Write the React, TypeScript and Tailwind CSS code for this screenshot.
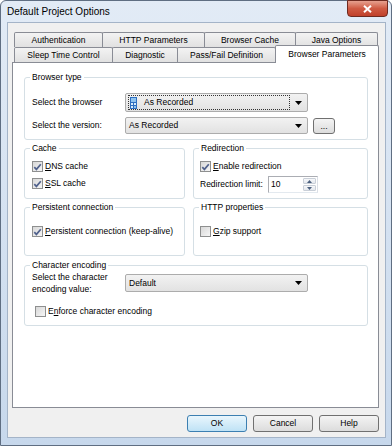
import React from 'react'

function Check({ checked }: { checked?: boolean }) {
  return (
    <span className="w-[11px] h-[11px] shrink-0 border border-[#8e8f8f] bg-linear-to-br from-[#d8d8d8] to-[#f6f6f6] flex items-center justify-center">
      {checked && (
        <svg width="9" height="8" viewBox="0 0 9 8">
          <path d="M1.3 4.2 L3.4 6.4 L7.8 1.2" fill="none" stroke="#50618c" strokeWidth="1.7" />
        </svg>
      )}
    </span>
  )
}

function CheckRow({ checked, pre, u, rest }: { checked?: boolean; pre?: string; u: string; rest: string }) {
  return (
    <div className="h-[13px] flex items-center gap-[2px]">
      <Check checked={checked} />
      <span className="leading-[11px]">
        {pre}
        <span className="underline underline-offset-[1px]">{u}</span>
        {rest}
      </span>
    </div>
  )
}

function Arrow() {
  return (
    <svg width="7" height="4" viewBox="0 0 7 4" className="shrink-0">
      <polygon points="0,0 7,0 3.5,4" fill="#000" />
    </svg>
  )
}

function Combo({ text, h, focus }: { text: string; h: string; focus?: boolean }) {
  return (
    <div className={`w-[183px] ${h} border border-[#acacac] rounded-[2px] bg-linear-to-b from-[#f2f2f2] to-[#e2e2e2] flex items-center pl-[2px] pr-[5px]`}>
      {focus ? (
        <div className="flex-1 h-[15px] border border-dotted border-[#333] flex items-center pl-[1px] mr-[5px]">
          <svg width="7" height="12" viewBox="0 0 7 12" className="mr-[7px]">
            <rect x="0" y="0" width="7" height="12" fill="#2f6fc0" />
            <rect x="1" y="1" width="5" height="4" fill="#8fc3ef" />
            <rect x="1" y="6" width="2" height="2" fill="#d9ecfb" />
            <rect x="4" y="6" width="2" height="2" fill="#d9ecfb" />
            <rect x="1" y="9" width="2" height="2" fill="#d9ecfb" />
            <rect x="4" y="9" width="2" height="2" fill="#8fc3ef" />
          </svg>
          <span>{text}</span>
        </div>
      ) : (
        <span className="flex-1 pl-[1px]">{text}</span>
      )}
      <Arrow />
    </div>
  )
}

function Group({ title, className, children }: { title: string; className: string; children: React.ReactNode }) {
  return (
    <fieldset className={`border border-[#d5dfe5] rounded-[3px] ${className}`}>
      <legend className="ml-[5px] px-[2px] leading-[12px]">{title}</legend>
      {children}
    </fieldset>
  )
}

function Btn({ label, primary }: { label: string; primary?: boolean }) {
  return (
    <div
      className={`w-[60px] h-[17px] rounded-[3px] border flex items-center justify-center ${
        primary
          ? 'border-[#3c7fb1] bg-linear-to-b from-[#e9f6fd] to-[#bfe2f5]'
          : 'border-[#707070] bg-linear-to-b from-[#f4f4f4] to-[#dcdcdc]'
      }`}
    >
      {label}
    </div>
  )
}

const tab = 'h-[15px] -ml-px first:ml-0 border border-b-0 border-[#898c95] rounded-t-[2px] bg-linear-to-b from-[#f3f3f3] to-[#e1e1e1] flex items-center justify-center'

export default function App() {
  return (
    <div className="w-[392px] h-[446px] overflow-hidden font-['Liberation_Sans',Arial,sans-serif] text-[8.5px] text-black">
      <div className="w-full h-full rounded-t-[6px] border border-[#5f6e82] bg-linear-to-b from-[#e2ebf6] to-[#c7d8ec] flex flex-col">
        {/* title bar */}
        <div className="h-[21px] flex items-start shrink-0">
          <span className="pl-[6px] pt-[5px] text-[10px] leading-[12px]">Default Project Options</span>
          <div className="ml-auto mr-[3px] -mt-px w-[41px] h-[17px] rounded-b-[4px] border border-[#6e2a20] bg-linear-to-b from-[#e6a08f] via-[#cf5a43] to-[#c0402a] flex items-center justify-center">
            <svg width="9" height="8" viewBox="0 0 9 8">
              <path d="M1 0.8 L8 7.2 M8 0.8 L1 7.2" stroke="#fff" strokeWidth="2" />
            </svg>
          </div>
        </div>

        {/* client area */}
        <div className="ml-[6px] mr-[5px] mb-[7px] flex-1 border border-[#a4b4c8] bg-[#f0f0f0] flex flex-col pt-[9px]">
          {/* tabs */}
          <div className="ml-[6px] flex flex-col relative z-10">
            <div className="flex">
              <div className={`${tab} w-[89px]`}>Authentication</div>
              <div className={`${tab} w-[103px]`}>HTTP Parameters</div>
              <div className={`${tab} w-[92px]`}>Browser Cache</div>
              <div className={`${tab} w-[83px]`}>Java Options</div>
            </div>
            <div className="flex items-end -mt-[2px] h-[17px]">
              <div className={`${tab} w-[99px]`}>Sleep Time Control</div>
              <div className={`${tab} w-[66px]`}>Diagnostic</div>
              <div className={`${tab} w-[99px]`}>Pass/Fail Definition</div>
              <div className="-ml-px w-[104px] h-[18px] -mb-px border border-b-0 border-[#898c95] rounded-t-[2px] bg-white flex items-start justify-center pt-[2px] relative z-10">
                Browser Parameters
              </div>
            </div>
          </div>

          {/* panel */}
          <div className="ml-[4px] w-[367px] h-[346px] border border-[#898c95] bg-white pl-[11px] pr-[10px] pt-[8px] flex flex-col">
            <Group title="Browser type" className="h-[69px]">
              <div className="pl-[7px] pt-[10px] flex flex-col gap-[5px]">
                <div className="flex items-center">
                  <span className="w-[93px]">Select the browser</span>
                  <Combo text="As Recorded" h="h-[19px]" focus />
                </div>
                <div className="flex items-center">
                  <span className="w-[93px]">Select the version:</span>
                  <Combo text="As Recorded" h="h-[17px]" />
                  <div className="ml-[5px] w-[22px] h-[16px] rounded-[3px] border border-[#707070] bg-linear-to-b from-[#f4f4f4] to-[#dcdcdc] flex items-center justify-center leading-[8px]">
                    ...
                  </div>
                </div>
              </div>
            </Group>

            <div className="mt-[2px] grid grid-cols-[161px_175px] gap-x-[8px]">
              <Group title="Cache" className="h-[57px]">
                <div className="pl-[7px] pt-[6px] flex flex-col gap-[4px]">
                  <CheckRow checked u="D" rest="NS cache" />
                  <CheckRow checked u="S" rest="SL cache" />
                </div>
              </Group>
              <Group title="Redirection" className="h-[57px]">
                <div className="pl-[6px] pt-[6px] flex flex-col gap-[3px]">
                  <CheckRow checked u="E" rest="nable redirection" />
                  <div className="flex items-center">
                    <span className="w-[68px]">Redirection limit:</span>
                    <div className="w-[50px] h-[17px] border border-[#abadb3] border-b-[#e3e9ef] border-r-[#dbdfe6] bg-white flex items-center pl-[2px]">
                      <span className="flex-1">10</span>
                      <div className="w-[14px] h-full flex flex-col py-[1px] pr-[1px] gap-px">
                        <div className="flex-1 border border-[#c9cfd8] rounded-[1px] bg-linear-to-b from-[#f7f8fa] to-[#e4e8ee] flex items-center justify-center">
                          <svg width="5" height="3" viewBox="0 0 5 3"><polygon points="0,3 5,3 2.5,0" fill="#4c607f" /></svg>
                        </div>
                        <div className="flex-1 border border-[#c9cfd8] rounded-[1px] bg-linear-to-b from-[#f7f8fa] to-[#e4e8ee] flex items-center justify-center">
                          <svg width="5" height="3" viewBox="0 0 5 3"><polygon points="0,0 5,0 2.5,3" fill="#4c607f" /></svg>
                        </div>
                      </div>
                    </div>
                  </div>
                </div>
              </Group>
            </div>

            <div className="mt-[2px] grid grid-cols-[161px_175px] gap-x-[8px]">
              <Group title="Persistent connection" className="h-[55px]">
                <div className="pl-[7px] pt-[12px]">
                  <CheckRow checked u="P" rest="ersistent connection (keep-alive)" />
                </div>
              </Group>
              <Group title="HTTP properties" className="h-[55px]">
                <div className="pl-[6px] pt-[12px]">
                  <CheckRow u="G" rest="zip support" />
                </div>
              </Group>
            </div>

            <Group title="Character encoding" className="mt-[3px] h-[67px]">
              <div className="pl-[7px] flex flex-col">
                <div className="h-[24px] flex items-center">
                  <span className="w-[93px] leading-[12px]">
                    Select the character
                    <br />
                    encoding value:
                  </span>
                  <Combo text="Default" h="h-[18px]" />
                </div>
                <div className="mt-[10px] pl-[3px]">
                  <CheckRow pre="E" u="n" rest="force character encoding" />
                </div>
              </div>
            </Group>
          </div>

          {/* buttons */}
          <div className="mt-[7px] mr-[6px] flex justify-end gap-[6px]">
            <Btn label="OK" primary />
            <Btn label="Cancel" />
            <Btn label="Help" />
          </div>
        </div>
      </div>
    </div>
  )
}
